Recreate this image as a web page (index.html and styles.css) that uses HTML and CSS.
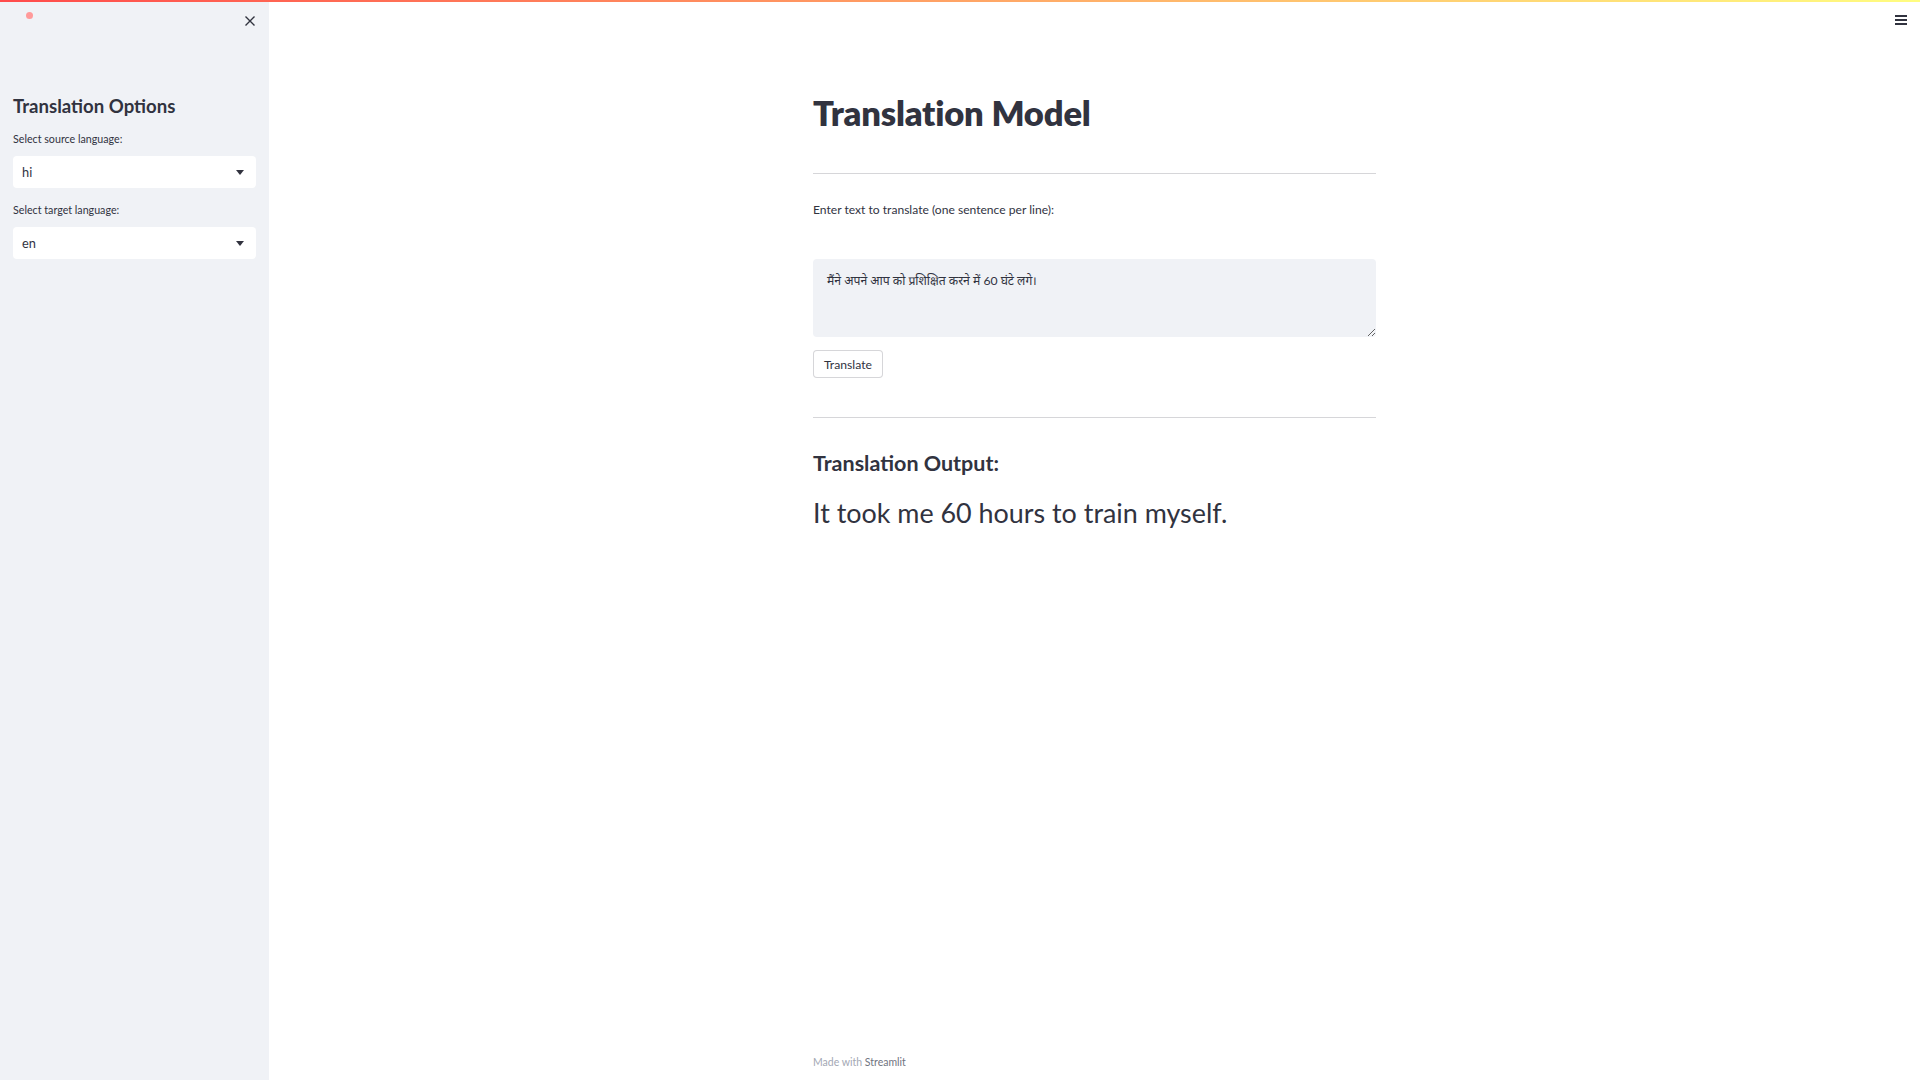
FILE: index.html
```html
<!DOCTYPE html>
<html lang="en">
<head>
<meta charset="utf-8">
<title>Translation Model</title>
<link rel="stylesheet" href="styles.css">
</head>
<body>
<div class="decoration"></div>
<div class="menu-btn" aria-label="menu"><span></span><span></span><span></span></div>
<div class="app">
  <aside class="sidebar">
    <div class="sidebar-top">
      <span class="dot"></span>
      <svg class="close" width="12" height="12" viewBox="0 0 12 12"><path d="M1.5 1.5 L10.5 10.5 M10.5 1.5 L1.5 10.5" stroke="#31333f" stroke-width="1.4" fill="none"/></svg>
    </div>
    <h2 class="side-title">Translation Options</h2>
    <label class="field-label">Select source language:</label>
    <div class="select"><span>hi</span><svg width="8" height="5" viewBox="0 0 8 5"><path d="M0 0 H8 L4 5 Z" fill="#31333f"/></svg></div>
    <label class="field-label second">Select target language:</label>
    <div class="select"><span>en</span><svg width="8" height="5" viewBox="0 0 8 5"><path d="M0 0 H8 L4 5 Z" fill="#31333f"/></svg></div>
  </aside>
  <main class="main">
    <div class="block">
      <h1 class="title">Translation Model</h1>
      <hr class="rule first">
      <label class="text-label">Enter text to translate (one sentence per line):</label>
      <textarea class="input-area" readonly>मैंने अपने आप को प्रशिक्षित करने में 60 घंटे लगे।</textarea>
      <button class="btn">Translate</button>
      <hr class="rule second">
      <h3 class="out-title">Translation Output:</h3>
      <p class="out-text">It took me 60 hours to train myself.</p>
    </div>
    <footer class="footer">Made with <span>Streamlit</span></footer>
  </main>
</div>
</body>
</html>
```
FILE: styles.css
```css
* { box-sizing: border-box; }
html, body { margin: 0; padding: 0; }
body {
  font-family: Lato, "Open Sans", "Noto Sans", "Noto Sans Devanagari", sans-serif;
  color: #31333f;
  background: #ffffff;
  width: 1920px;
  height: 1080px;
  overflow: hidden;
}
.decoration {
  position: absolute;
  top: 0; left: 0; right: 0;
  height: 2px;
  background: linear-gradient(90deg, #ff4b4b, #fffd80);
  z-index: 10;
}
.menu-btn {
  position: absolute;
  top: 15px;
  left: 1895px;
  width: 12px;
  display: flex;
  flex-direction: column;
  gap: 2.5px;
}
.menu-btn span {
  display: block;
  height: 1.5px;
  background: #31333f;
}
.app {
  display: flex;
  height: 1080px;
}
.sidebar {
  width: 269px;
  flex: none;
  background: #f0f2f6;
  padding: 0 13px;
  display: flex;
  flex-direction: column;
}
.sidebar-top {
  height: 40px;
  display: flex;
  justify-content: space-between;
  align-items: flex-start;
}
.dot {
  width: 7px; height: 7px;
  border-radius: 50%;
  background: #ff9a9a;
  margin: 12px 0 0 13px;
}
.close { margin: 15px 0 0 0; }
.side-title {
  margin: 54px 0 0 0;
  font-size: 18.6px;
  line-height: 24px;
  font-weight: 700;
}
.field-label {
  display: block;
  font-size: 10.7px;
  line-height: 14px;
  margin-top: 14px;
}
.field-label.second { margin-top: 15px; }
.select {
  margin-top: 10px;
  height: 32px;
  background: #ffffff;
  border-radius: 4px;
  display: flex;
  align-items: center;
  justify-content: space-between;
  padding: 0 12px 0 9px;
  font-size: 12.8px;
}
.main {
  flex: 1;
  display: flex;
  flex-direction: column;
  align-items: center;
  padding: 91px 0 11px;
}
.block {
  width: 563px;
  display: flex;
  flex-direction: column;
  align-items: flex-start;
}
.title {
  margin: 0;
  font-size: 34.6px;
  line-height: 44px;
  font-weight: 800;
  letter-spacing: -0.2px;
}
.rule {
  width: 100%;
  border: 0;
  border-top: 1px solid rgba(49, 51, 63, 0.2);
  margin: 0;
}
.rule.first { margin-top: 38px; }
.text-label {
  margin-top: 28px;
  font-size: 12.1px;
  line-height: 16px;
}
.input-area {
  margin-top: 41px;
  width: 100%;
  height: 78px;
  background: #f0f2f6;
  border: 0;
  border-radius: 4px;
  padding: 14px 14px;
  font-family: Lato, "Noto Sans Devanagari", "Noto Sans", sans-serif;
  font-size: 12.2px;
  line-height: 16px;
  color: #31333f;
  resize: vertical;
  outline: none;
}
.btn {
  margin-top: 13px;
  height: 28px;
  width: 70px;
  padding: 0;
  background: #ffffff;
  border: 1px solid rgba(49, 51, 63, 0.2);
  border-radius: 4px;
  font-family: inherit;
  font-size: 12.2px;
  color: #31333f;
}
.rule.second { margin-top: 39px; }
.out-title {
  margin: 31px 0 0;
  font-size: 21.5px;
  line-height: 28px;
  font-weight: 700;
}
.out-text {
  margin: 18px 0 0;
  font-size: 26.9px;
  line-height: 36px;
}
.footer {
  margin-top: auto;
  width: 563px;
  font-size: 10.5px;
  line-height: 14px;
  color: #a3a8b4;
}
.footer span { color: #6f7480; }
```
